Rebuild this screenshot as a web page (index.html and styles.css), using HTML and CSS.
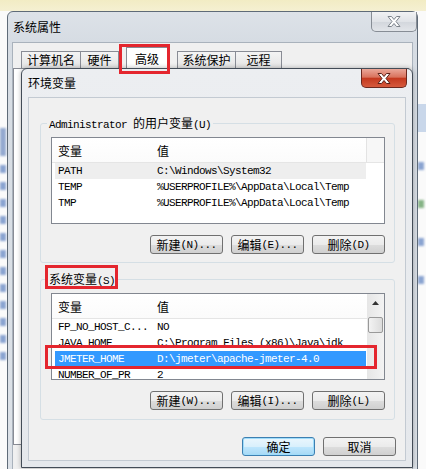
FILE: index.html
```html
<!DOCTYPE html>
<html lang="zh-CN">
<head>
  <meta charset="UTF-8">
  <title>系统属性 - 环境变量</title>
  <link rel="stylesheet" href="styles.css">
</head>
<body>
  <div class="desktop">
    <!-- 背后其他窗口的模糊边角 -->
    <div class="bg-left">
      <span class="blob big"></span>
      <span class="blob"></span>
      <span class="blob"></span>
      <span class="blob"></span>
      <span class="blob"></span>
      <span class="blob"></span>
      <span class="blob"></span>
      <span class="blob"></span>
      <span class="blob"></span>
      <span class="blob"></span>
      <span class="blob"></span>
      <span class="blob"></span>
      <span class="blob"></span>
    </div>
    <div class="bg-right">
      <span class="stripe"></span>
      <span class="blob"></span>
      <span class="blob green"></span>
      <span class="blob"></span>
      <span class="blob"></span>
    </div>

    <!-- 系统属性 -->
    <div class="win sys">
      <div class="sys-title">系统属性</div>
      <div class="close close-idle">
        <svg width="14" height="11" viewBox="0 0 14 11"><polygon points="1,0.5 4.5,0.5 7,3.5 9.5,0.5 13,0.5 9,5.5 13,10.5 9.5,10.5 7,7.5 4.5,10.5 1,10.5 5,5.5" fill="#fff" stroke="#7d838b" stroke-width="1"/></svg>
      </div>
      <div class="sys-client">
        <div class="tabs">
          <div class="tab t1">计算机名</div>
          <div class="tab t2">硬件</div>
          <div class="tab t3 active">高级</div>
          <div class="tab t4">系统保护</div>
          <div class="tab t5">远程</div>
        </div>
        <div class="tab-panel"></div>
      </div>
    </div>

    <!-- 环境变量 -->
    <div class="win env">
      <div class="env-title">环境变量</div>
      <div class="close close-red">
        <svg width="14" height="11" viewBox="0 0 14 11"><polygon points="1,0.5 4.5,0.5 7,3.5 9.5,0.5 13,0.5 9,5.5 13,10.5 9.5,10.5 7,7.5 4.5,10.5 1,10.5 5,5.5" fill="#fff" stroke="#5b2118" stroke-width="1"/></svg>
      </div>
      <div class="env-client">
        <div class="group">
          <div class="group-label"><span class="mono">Administrator </span>的用户变量<span class="mono">(U)</span></div>
          <div class="list">
            <div class="list-body">
              <div class="list-head">
                <div class="col-name">变量</div>
                <div class="col-value">值</div>
                <div class="col-end"></div>
              </div>
              <div class="row dim"><span>PATH</span><span>C:\Windows\System32</span></div>
              <div class="row"><span>TEMP</span><span>%USERPROFILE%\AppData\Local\Temp</span></div>
              <div class="row"><span>TMP</span><span>%USERPROFILE%\AppData\Local\Temp</span></div>
            </div>
          </div>
          <div class="btn-row">
            <button class="btn">新建<span class="mono">(N)...</span></button>
            <button class="btn">编辑<span class="mono">(E)...</span></button>
            <button class="btn">删除<span class="mono">(D)</span></button>
          </div>
        </div>

        <div class="group second">
          <div class="group-label">系统变量<span class="mono">(S)</span></div>
          <div class="list">
            <div class="list-body">
              <div class="list-head">
                <div class="col-name">变量</div>
                <div class="col-value">值</div>
              </div>
              <div class="row"><span>FP_NO_HOST_C...</span><span>NO</span></div>
              <div class="row"><span>JAVA_HOME</span><span>C:\Program Files (x86)\Java\jdk</span></div>
              <div class="row sel"><span>JMETER_HOME</span><span>D:\jmeter\apache-jmeter-4.0</span></div>
              <div class="row"><span>NUMBER_OF_PR</span><span>2</span></div>
            </div>
            <div class="scrollbar">
              <div class="sb-up">
                <svg width="7" height="4" viewBox="0 0 7 4"><polygon points="0,4 3.5,0 7,4" fill="#333"/></svg>
              </div>
              <div class="sb-thumb"></div>
            </div>
          </div>
          <div class="btn-row">
            <button class="btn">新建<span class="mono">(W)...</span></button>
            <button class="btn">编辑<span class="mono">(I)...</span></button>
            <button class="btn">删除<span class="mono">(L)</span></button>
          </div>
        </div>

        <div class="dialog-buttons">
          <button class="btn btn-default">确定</button>
          <button class="btn">取消</button>
        </div>
      </div>
    </div>

    <!-- 红框标注 -->
    <div class="mark mark-tab"></div>
    <div class="mark mark-label"></div>
    <div class="mark mark-row"></div>
  </div>
</body>
</html>
```

FILE: styles.css
```css
:root {
  --face: #f0f0f0;
  --list-border: #828790;
  --tab-border: #898c95;
  --mark: #e4262e;
  --select: #3399ff;
}

* {
  box-sizing: border-box;
  margin: 0;
  padding: 0;
}

body {
  width: 426px;
  height: 469px;
  overflow: hidden;
  font-family: "Noto Sans CJK SC", "Liberation Sans", sans-serif;
  font-size: 12px;
  color: #000;
  background: #fafafa;
}

.mono {
  font-family: "Liberation Mono", "Noto Sans CJK SC", monospace;
  font-size: 11px;
  letter-spacing: -0.6px;
}

.desktop {
  position: relative;
  width: 426px;
  height: 469px;
  overflow: hidden;
  background: linear-gradient(#f2ecc4 0, #f5f0d2 11px, #fafafa 11px);
}

/* background windows */
.bg-left {
  position: absolute;
  left: 0;
  top: 128px;
  width: 7px;
  display: flex;
  flex-direction: column;
  gap: 9px;
}

.blob {
  display: block;
  height: 8px;
  width: 6px;
  background: #6f8fc8;
  filter: blur(1.2px);
  opacity: 0.8;
}

.blob.big {
  height: 28px;
  background: #7b96c6;
}

.blob.green {
  background: #6aa36a;
}

.bg-right {
  position: absolute;
  left: 418px;
  top: 104px;
  width: 8px;
  display: flex;
  flex-direction: column;
  gap: 30px;
}

.stripe {
  display: block;
  height: 28px;
  background: #c9d7ea;
}

/* windows */
.win {
  position: absolute;
  border: 1px solid #5f6b78;
  border-radius: 6px 6px 0 0;
}

.sys {
  left: 7px;
  top: 11px;
  width: 411px;
  height: 470px;
  background: linear-gradient(#dde2e8, #d6dce3 30px, #dde2e8);
}

.sys-title {
  height: 30px;
  line-height: 30px;
  padding-left: 5px;
}

.close {
  position: absolute;
  top: 0;
  width: 46px;
  border: 1px solid;
  border-top: none;
  border-radius: 0 0 5px 5px;
  display: flex;
  align-items: center;
  justify-content: center;
}

.close-idle {
  right: 0;
  height: 20px;
  border-color: #878d95;
  background: linear-gradient(#f1f2f4, #e0e3e7 50%, #d2d6dc 51%, #e2e5e9);
}

.close-red {
  right: 5px;
  height: 19px;
  border-color: #6c281e;
  background: linear-gradient(#eaa799, #d9735d 45%, #c4391f 52%, #d65a3d);
}

.sys-client {
  margin: 0 4px;
  height: 440px;
  padding-top: 8px;
  background: var(--face);
  border: 1px solid #a9b2bc;
}

.tabs {
  display: flex;
  align-items: flex-end;
  padding-left: 8px;
  height: 17px;
}

.tab {
  height: 17px;
  line-height: 16px;
  text-align: center;
  border: 1px solid var(--tab-border);
  border-bottom: none;
  background: linear-gradient(#f4f4f4, #e4e4e4);
}

.tab.active {
  height: 21px;
  padding-top: 3px;
  background: #fff;
}

.t1 { width: 60px; }
.t2 { width: 39px; margin-left: -1px; }
.t3 { width: 42px; margin-left: 7px; }
.t4 { width: 59px; margin-left: 9px; }
.t5 { width: 47px; margin-left: -1px; }

.tab-panel {
  height: 377px;
  margin-right: 3px;
  background: #fff;
  border: 1px solid var(--tab-border);
}

.env {
  left: 21px;
  top: 68px;
  width: 392px;
  height: 400px;
  border-color: #434c57;
  background: linear-gradient(#eceef1, #e5e8ec);
  box-shadow: 0 0 5px rgba(0, 0, 0, 0.3);
}

.env-title {
  height: 28px;
  line-height: 28px;
  padding-left: 6px;
}

.env-client {
  margin: 0 6px;
  height: 364px;
  padding: 25px 10px 0 11px;
  background: var(--face);
  border: 1px solid #c3cad2;
}

/* group boxes */
.group {
  height: 140px;
  display: flex;
  flex-direction: column;
  padding: 0 9px 0 10px;
  border: 1px solid #d5dfe5;
  border-radius: 3px;
}

.group.second {
  height: 141px;
  margin-top: 16px;
}

.group-label {
  align-self: flex-start;
  height: 16px;
  line-height: 16px;
  margin: -9px 0 0 -4px;
  padding: 0 2px;
  background: var(--face);
  white-space: pre;
}

/* list views */
.list {
  display: flex;
  height: 87px;
  margin-top: 6px;
  overflow: hidden;
  background: #fff;
  border: 1px solid var(--list-border);
}

.list-body {
  flex: 1;
  min-width: 0;
}

.list-head {
  display: grid;
  grid-template-columns: 105px 1fr 18px;
  height: 25px;
  align-items: center;
  border-bottom: 1px solid #e5e5e5;
  background: linear-gradient(#fff, #fbfbfb);
}

.col-name {
  padding-left: 6px;
}

.col-end {
  height: 100%;
  border-left: 1px solid #e3e3e3;
  background: #f7f7f7;
}

.row {
  display: grid;
  grid-template-columns: 99px 1fr;
  height: 16px;
  line-height: 16px;
  margin: 0 18px 0 3px;
  padding-left: 3px;
  font-family: "Liberation Mono", monospace;
  font-size: 11px;
  letter-spacing: -0.6px;
  white-space: pre;
  overflow: hidden;
}

.row.dim {
  background: #eeeeee;
}

.row.sel {
  background: var(--select);
  color: #fff;
}

.group.second .row {
  margin-right: 1px;
}

.scrollbar {
  width: 17px;
  display: flex;
  flex-direction: column;
  background: linear-gradient(90deg, #e6e6e6, #f3f3f3);
}

.sb-up {
  height: 17px;
  display: flex;
  align-items: center;
  justify-content: center;
}

.sb-thumb {
  height: 16px;
  margin: 6px 1px 0;
  border: 1px solid #999;
  border-radius: 2px;
  background: linear-gradient(90deg, #f3f3f3, #dcdcdc);
}

/* buttons */
.btn-row,
.dialog-buttons {
  display: flex;
  justify-content: flex-end;
  gap: 8px;
}

.btn-row {
  margin-top: 11px;
}

.dialog-buttons {
  margin-top: 17px;
  margin-right: -1px;
}

.btn {
  width: 73px;
  height: 19px;
  display: flex;
  align-items: center;
  justify-content: center;
  font: inherit;
  line-height: 16px;
  color: #000;
  border: 1px solid #707070;
  border-radius: 3px;
  background: linear-gradient(#f3f3f3, #ebebeb 50%, #dddddd 51%, #d0d0d0);
  white-space: pre;
}

.btn-default {
  border-color: #3c7fb1;
  background: linear-gradient(#eaf6fd, #d9f0fc 50%, #bee6fd 51%, #a7d9f5);
  box-shadow: inset 0 0 0 1px #9fdcfa;
}

/* red annotations */
.mark {
  position: absolute;
  border: 3px solid var(--mark);
}

.mark-tab {
  left: 119px;
  top: 44px;
  width: 51px;
  height: 30px;
}

.mark-label {
  left: 45px;
  top: 265px;
  width: 73px;
  height: 24px;
}

.mark-row {
  left: 45px;
  top: 345px;
  width: 332px;
  height: 24px;
}
```
